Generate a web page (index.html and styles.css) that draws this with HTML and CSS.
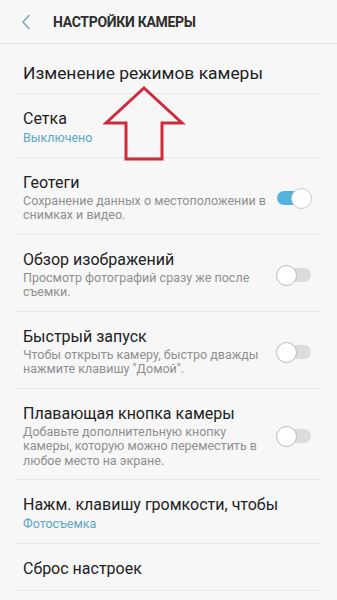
FILE: index.html
```html
<!DOCTYPE html>
<html lang="ru">
<head>
<meta charset="utf-8">
<link rel="stylesheet" href="styles.css">
</head>
<body>
<div class="screen">
  <header class="bar">
    <svg class="back" width="10" height="16" viewBox="0 0 10 16"><path d="M8 1.5 L2 8 L8 14.5" fill="none" stroke="#7fa9b4" stroke-width="1.6" stroke-linecap="round" stroke-linejoin="round"/></svg>
    <h1 class="title">НАСТРОЙКИ КАМЕРЫ</h1>
  </header>
  <ul class="list">
    <li class="row first"><div class="text"><div class="name">Изменение режимов камеры</div></div></li>
    <li class="row"><div class="text"><div class="name">Сетка</div><div class="value">Выключено</div></div></li>
    <li class="row"><div class="text"><div class="name">Геотеги</div><div class="sub">Сохранение данных о местоположении в снимках и видео.</div></div><span class="toggle on"></span></li>
    <li class="row"><div class="text"><div class="name">Обзор изображений</div><div class="sub">Просмотр фотографий сразу же после съемки.</div></div><span class="toggle"></span></li>
    <li class="row"><div class="text"><div class="name">Быстрый запуск</div><div class="sub">Чтобы открыть камеру, быстро дважды нажмите клавишу "Домой".</div></div><span class="toggle"></span></li>
    <li class="row"><div class="text"><div class="name">Плавающая кнопка камеры</div><div class="sub">Добавьте дополнительную кнопку камеры, которую можно переместить в любое место на экране.</div></div><span class="toggle"></span></li>
    <li class="row"><div class="text"><div class="name">Нажм. клавишу громкости, чтобы</div><div class="value">Фотосъемка</div></div></li>
    <li class="row last"><div class="text"><div class="name">Сброс настроек</div></div></li>
  </ul>
  <svg class="arrow" width="84" height="78" viewBox="0 0 84 78"><path d="M38 2 L76 37 L56 37 L56 73 L20 73 L20 37 L0 37 Z" transform="translate(3 2)" fill="none" stroke="#d02a3c" stroke-width="3" stroke-linejoin="miter"/></svg>
</div>
</body>
</html>
```
FILE: styles.css
```css
* { box-sizing: border-box; }
html, body { margin: 0; padding: 0; background: #f7f7f7; }
body { font-family: Roboto, "Noto Sans", sans-serif; color: #222; }
.screen { position: relative; width: 337px; height: 600px; overflow: hidden; background: #f7f7f7; }
.bar { display: flex; align-items: center; height: 44px; border-bottom: 1px solid #e6e6e6; padding-left: 21px; }
.back { flex: none; }
.title { margin: 0 0 0 22px; font-size: 14px; font-weight: 700; color: #2e2e2e; letter-spacing: -0.3px; }
.list { list-style: none; margin: 0; padding: 0; }
.row { display: flex; align-items: center; margin: 0 17px 0 15px; padding: 15px 8px 11px 8px; border-bottom: 1px solid #e8e8e8; gap: 8px; }
.row.first { padding-top: 19px; padding-bottom: 10px; }
.row.last { padding-top: 15px; padding-bottom: 11px; }
.text { flex: 1; min-width: 0; }
.name { font-size: 16px; line-height: 20px; color: #222; }
.first .name { font-size: 17.4px; }
.sub { margin-top: 1px; font-size: 12.5px; line-height: 14.5px; color: #8f8f8f; }
.value { margin-top: 2px; font-size: 12.5px; line-height: 14.5px; color: #5aa7c4; }
.toggle { position: relative; flex: none; width: 36px; height: 20px; }
.toggle::before { content: ""; position: absolute; left: 1px; right: 1px; top: 3px; height: 14px; border-radius: 7px; background: #dcdcdc; }
.toggle::after { content: ""; position: absolute; left: 0; top: 0; width: 19px; height: 19px; border-radius: 50%; background: #fff; border: 1.3px solid #b9b9b9; }
.toggle.on::before { background: #55b3dc; }
.toggle.on::after { left: auto; right: 0; border-color: #c8c8c8; }
.arrow { position: absolute; left: 103px; top: 84px; }
```
